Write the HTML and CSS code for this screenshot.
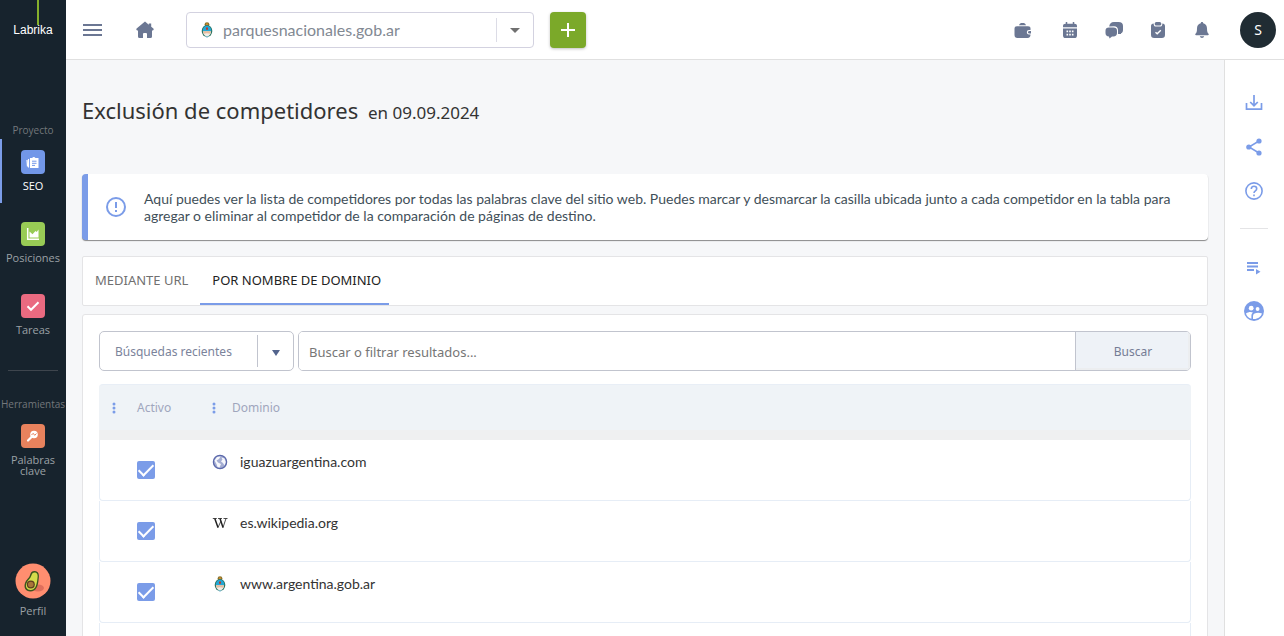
FILE: index.html
```html
<!DOCTYPE html>
<html lang="es">
<head>
<meta charset="utf-8">
<meta name="viewport" content="width=device-width, initial-scale=1">
<title>Exclusión de competidores</title>
<link rel="stylesheet" href="styles.css">
</head>
<body>
<svg class="defs" aria-hidden="true">
  <symbol id="crest" viewBox="0 0 16 16">
    <circle cx="8" cy="2.600" r="2.400" fill="#8a742c"/>
    <circle cx="8" cy="2.200" r="1" fill="#d88b2c"/>
    <ellipse cx="8" cy="9" rx="5.300" ry="6" fill="#2d7460"/>
    <path d="M3.700 9.200C3.700 2 12.300 2 12.300 9.200Z" fill="#22a7d6"/>
    <path d="M4 9.200h8c0 6.800-8 6.800-8 0Z" fill="#f0eee9"/>
    <path d="M4 9.200h8l-.8 2.600L8 11.200l-3.200.6Z" fill="#e8bd9f"/>
    <path d="M7 5.500h2v2.200H7Z" fill="#b83b31"/>
    <path d="M6 14.300h4L8 16Z" fill="#8fc8dc"/>
  </symbol>
</svg>
<div class="app">
  <nav class="sidebar" aria-label="Principal">
    <a class="logo" href="#"><span class="logo-line"></span>Labrika</a>
    <p class="group">Proyecto</p>
    <a class="item active" href="#">
      <span class="tile blue"><svg width="14" height="14" viewBox="0 0 14 14"><path d="M4 3h2.200a1.800 1.800 0 0 1 3.200 0H12.500v10H4Z" fill="#fff"/><path d="M2.500 4v8.500M1 5l.5 6.500" stroke="#fff" stroke-width="1.200"/><path d="M6 6.200h4.500M6 8.300h4.500M6 10.400h3" stroke="#7297e8"/></svg></span>
      SEO</a>
    <a class="item" href="#">
      <span class="tile green"><svg width="14" height="14" viewBox="0 0 14 14"><path d="M1.700 1v11.300H13" fill="none" stroke="#fff" stroke-width="1.500"/><path d="M3.500 10.500V4.500l3 2.700L9.500 4 10.700 5 12.500 2.500v8Z" fill="#fff"/></svg></span>
      Posiciones</a>
    <a class="item" href="#">
      <span class="tile pink"><svg width="14" height="14" viewBox="0 0 14 14"><path d="M1.500 7.300 5 10.800 12.500 3.300" fill="none" stroke="#fff" stroke-width="2"/></svg></span>
      Tareas</a>
    <hr class="side-rule">
    <p class="group">Herramientas</p>
    <a class="item tools" href="#">
      <span class="tile orange"><svg width="14" height="14" viewBox="0 0 14 14"><circle cx="8" cy="5.500" r="3.800" fill="#fff"/><path d="M5.500 8 2 11.500" stroke="#fff" stroke-width="2.200" stroke-linecap="round"/><path d="m5.500 6 1.700-1.700 1.500 2L10.500 4.500" stroke="#e8825d" fill="none"/></svg></span>
      Palabras clave</a>
    <a class="item profile" href="#">
      <svg width="36" height="36" viewBox="0 0 36 36"><circle cx="18" cy="18" r="17.500" fill="#ff8e70"/><ellipse cx="23" cy="25" rx="6" ry="3.500" fill="#df6f5c"/><path d="M20 8c5 .5 4 6 3.500 9.500C23 23 21 28.500 15.500 28.500c-5 0-7-4-5.500-8.500 1.500-4 4-4.500 5-8 .7-2.500 2-4.200 5-4Z" fill="#3c541d"/><path d="M20 9.500c3.500.5 2.800 4.500 2.200 8C21.500 22.500 20 27 15.700 27c-4 0-5.500-3-4.300-6.500 1.200-3.500 4-4.500 5-8 .6-2 1.600-3.200 3.600-3Z" fill="#d5dc4b"/><circle cx="15.800" cy="21.500" r="4" fill="#5d3c20"/><circle cx="15.800" cy="21.500" r="2.800" fill="#a9753a"/></svg>
      Perfil</a>
  </nav>

  <header class="topbar">
    <button class="icon-btn menu" aria-label="Menú"><svg width="20" height="14" viewBox="0 0 20 14"><path d="M0 2h19M0 7h19M0 12h19" stroke="#6b7793" stroke-width="2"/></svg></button>
    <a class="home" href="#" aria-label="Inicio"><svg width="18" height="18" viewBox="0 0 18 18"><path d="M9 .5.600 7.500Q-.2 9.200 1.200 9.500H2v6A1.500 1.500 0 0 0 3.500 17H7v-4a1 1 0 0 1 1-1h2a1 1 0 0 1 1 1v4h3.500a1.500 1.500 0 0 0 1.500-1.500v-6h.8Q18.200 9.200 17.400 7.500L15.200 5.700V2.500h-2.400V3.700Z" fill="#6b7793"/></svg></a>
    <div class="site">
      <svg class="site-icon" width="16" height="16" aria-hidden="true"><use href="#crest"/></svg>
      <select class="site-select" aria-label="Sitio web"><option>parquesnacionales.gob.ar</option></select>
      <svg class="site-arrow" width="37" height="24" viewBox="0 0 37 24" aria-hidden="true"><path d="M.5 0v24" stroke="#dcdce6"/><path d="M14 10h10l-5 5Z" fill="#707070"/></svg>
    </div>
    <button class="add" aria-label="Agregar"><svg width="14" height="14" viewBox="0 0 14 14"><path d="M7 0v14M0 7h14" stroke="#fff" stroke-width="2"/></svg></button>
    <div class="actions">
      <button class="icon-btn wallet" aria-label="Cartera"><svg width="18" height="18" viewBox="0 0 18 18" fill="#6b7793"><path d="M5 4.300C5.500 2.500 6.500 2 8.500 2s3 .5 3.500 2.300Z"/><path d="M3 5.200h11c1.600 0 2.500.9 2.500 2.300V9H15a2.200 2.200 0 0 0 0 4.400h1.500c0 2-.8 3.600-3 3.600H3.500C1.500 17 .5 16 .5 14V7.700C.5 6 1.400 5.200 3 5.200Z"/><path d="M15.300 10H17v2.500h-1.700a1.200 1.200 0 0 1 0-2.500Z"/></svg></button>
      <button class="icon-btn" aria-label="Calendario"><svg width="18" height="18" viewBox="0 0 18 18"><path d="M2 6.200V5c0-1.500 1-2.300 2.500-2.300h9C15 2.700 16 3.500 16 5v1.200ZM2 7.400h14v7c0 1.700-1 2.600-2.500 2.600h-9C3 17 2 16 2 14.400Z" fill="#6b7793"/><path d="M5.500 1v3M12.500 1v3" stroke="#6b7793" stroke-width="1.500"/><path d="M5.500 10.400h7M5.500 13.600h7" stroke="#fff" stroke-width="1.800" stroke-dasharray="1.600 1.100"/></svg></button>
      <button class="icon-btn" aria-label="Mensajes"><svg width="20" height="18" viewBox="0 0 20 18" fill="#6b7793"><path d="M5.200 5.500C5.700 2.500 7 1 10 1h4.500C17.500 1 19 2.500 19 5v4c0 2-1 3-2 3.300V13h-3V9c0-2.500-1.500-3.800-4-3.800Z"/><path d="M5 6.500h4.500c2.200 0 3.500 1 3.500 3.200V12c0 2.300-1.300 3.500-3.500 3.500H8L5.500 17.500 5 15.500C2.700 15.500 1.500 14.300 1.500 12V9.700C1.500 7.500 2.800 6.500 5 6.500Z"/></svg></button>
      <button class="icon-btn" aria-label="Tareas"><svg width="18" height="18" viewBox="0 0 18 18"><path d="M2 5.200C2 3.400 3 2.500 4.600 2.400 4.800 4.700 5.500 5.500 7 5.500h4c1.500 0 2.200-.8 2.400-3.100C15 2.500 16 3.400 16 5.200v8.600c0 2.200-1 3.200-3.200 3.200H5.200C3 17 2 16 2 13.800Z" fill="#6b7793"/><rect x="5.700" y="1" width="6.600" height="3.500" rx="1.600" fill="#6b7793"/><path d="m6.500 11.200 1.700 1.600L11.800 9.300" fill="none" stroke="#fff" stroke-width="1.400"/></svg></button>
      <button class="icon-btn" aria-label="Notificaciones"><svg width="18" height="18" viewBox="0 0 18 18" fill="#6b7793"><path d="M9 1c.8 0 1.200.6 1.200 1.200C13 2.800 14 5 14 7.500c0 3.300.5 4.200 1.500 5.200.5.600.3 1.500-.6 1.500H3.100c-.9 0-1.100-.9-.6-1.500C3.500 11.700 4 10.800 4 7.500 4 5 5 2.800 7.800 2.200 7.800 1.600 8.200 1 9 1ZM6.800 15.200h4.400c-.4 1.200-1.200 1.700-2.200 1.700s-1.800-.5-2.200-1.700Z"/></svg></button>
      <button class="avatar">S</button>
    </div>
  </header>

  <main class="main">
    <h1 class="title">Exclusión de competidores <small>en 09.09.2024</small></h1>
    <section class="notice">
      <svg class="notice-icon" width="20" height="20" viewBox="0 0 20 20"><circle cx="10" cy="10" r="9" fill="none" stroke="#7b9ce8" stroke-width="2"/><path d="M10 5v6M10 13v2" stroke="#7b9ce8" stroke-width="2"/></svg>
      <p>Aquí puedes ver la lista de competidores por todas las palabras clave del sitio web. Puedes marcar y desmarcar la casilla ubicada junto a cada competidor en la tabla para agregar o eliminar al competidor de la comparación de páginas de destino.</p>
    </section>
    <div class="tabs" role="tablist">
      <button class="tab" role="tab" aria-selected="false">MEDIANTE URL</button>
      <button class="tab selected" role="tab" aria-selected="true">POR NOMBRE DE DOMINIO</button>
    </div>
    <section class="panel">
      <form class="search">
        <button type="button" class="recent"><span class="recent-label">Búsquedas recientes</span><span class="recent-arrow"><svg width="8" height="6" viewBox="0 0 8 6"><path d="M0 0h8L4 6Z" fill="#53648d"/></svg></span></button>
        <div class="query">
          <input class="query-input" type="text" aria-label="Buscar" placeholder="Buscar o filtrar resultados...">
          <button type="button" class="query-btn">Buscar</button>
        </div>
      </form>
      <table class="grid">
        <thead>
          <tr>
            <th class="col-active"><span class="head"><svg width="4" height="12" viewBox="0 0 4 12" fill="#7b9ce8"><circle cx="2" cy="2" r="1.500"/><circle cx="2" cy="6" r="1.500"/><circle cx="2" cy="10" r="1.500"/></svg>Activo</span></th>
            <th><span class="head head-domain"><svg width="4" height="12" viewBox="0 0 4 12" fill="#7b9ce8"><circle cx="2" cy="2" r="1.500"/><circle cx="2" cy="6" r="1.500"/><circle cx="2" cy="10" r="1.500"/></svg>Dominio</span></th>
          </tr>
        </thead>
        <tbody>
          <tr>
            <td class="cell-check"><input class="check" type="checkbox" checked aria-label="iguazuargentina.com"></td>
            <td><span class="domain"><svg width="16" height="16" viewBox="0 0 16 16"><circle cx="8" cy="8" r="6.600" fill="#a5aed3" stroke="#5b68ab" stroke-width="1.300"/><path d="M2.500 6.500 5 3 8.500 2.500 7 5 4.500 6.500 6 8.500 9 10 7.500 13.500 5.500 13 4.500 10ZM9.500 3.500 12.500 4.500 13.700 8 12.500 11.500 11 9 9 7.500 10.500 5.500Z" fill="#f7f8fc"/></svg>iguazuargentina.com</span></td>
          </tr>
          <tr>
            <td class="cell-check"><input class="check" type="checkbox" checked aria-label="es.wikipedia.org"></td>
            <td><span class="domain"><svg width="16" height="16" viewBox="0 0 16 16" fill="none" stroke="#222"><path d="M.8 3.500h4M6 3.500h4M11.500 3.500H15.500" stroke-width=".8"/><path d="M2.800 3.500 6 12.500M8 3.500 11 12.500" stroke-width="1.500"/><path d="M5.800 12.800 9 6M10.900 12.800 14 3.500" stroke-width=".8"/></svg>es.wikipedia.org</span></td>
          </tr>
          <tr>
            <td class="cell-check"><input class="check" type="checkbox" checked aria-label="www.argentina.gob.ar"></td>
            <td><span class="domain"><svg width="16" height="16"><use href="#crest"/></svg>www.argentina.gob.ar</span></td>
          </tr>
          <tr><td></td><td></td></tr>
        </tbody>
      </table>
    </section>
  </main>

  <aside class="rail" aria-label="Herramientas de página">
    <button class="icon-btn" aria-label="Descargar"><svg width="18" height="18" viewBox="0 0 18 18" fill="none" stroke="#7b9ce8" stroke-width="1.700"><path d="M1.500 9v6.200h15V9M9 1v10.500M5.200 8 9 11.700 12.800 8"/></svg></button>
    <button class="icon-btn" aria-label="Compartir"><svg width="18" height="18" viewBox="0 0 18 18" fill="#7b9ce8"><path d="M14 3 4 9l10 6" fill="none" stroke="#7b9ce8" stroke-width="1.500"/><circle cx="14" cy="3" r="2.600"/><circle cx="3.800" cy="9" r="2.600"/><circle cx="14" cy="15" r="2.600"/></svg></button>
    <button class="icon-btn" aria-label="Ayuda"><svg width="18" height="18" viewBox="0 0 18 18" fill="none" stroke="#7b9ce8" stroke-width="1.600"><circle cx="9" cy="9" r="8.100"/><path d="M6.300 7C6.300 3.300 11.700 3.500 11.700 6.800 11.700 8.900 9 8.800 9 11M9 12.500v1.700"/></svg></button>
    <hr class="rail-rule">
    <button class="icon-btn" aria-label="Lista"><svg width="18" height="18" viewBox="0 0 18 18"><path d="M2 5h11M2 8.500h11M2 12h7" stroke="#7b9ce8" stroke-width="1.800"/><path d="M11 11v5.500L15.500 13.800Z" fill="#7b9ce8"/></svg></button>
    <button class="icon-btn" aria-label="Competidores"><svg width="20" height="20" viewBox="0 0 20 20"><circle cx="10" cy="10" r="10" fill="#7b9ce8"/><g fill="#fff"><circle cx="7.200" cy="7.200" r="2.400"/><circle cx="13.600" cy="8" r="1.900"/><path d="M2 12.500c2-1.500 5-2 7-.9-1.200.9-1.600 2-1.600 3.600v2.500C4.500 17 2.500 15 2 12.500ZM9 18v-3c0-3 5-4 9-2.500-1 3.300-4.500 6-9 5.500Z"/></g></svg></button>
  </aside>
</div>
</body>
</html>
```
FILE: styles.css
```css
* { box-sizing: border-box; }
body {
  margin: 0;
  background: #f6f7f9;
  color: #333;
  font-family: "Noto Sans", "Open Sans", sans-serif;
  font-size: 13px;
}
button, input, select { font: inherit; }
button { margin: 0; padding: 0; border: 0; background: none; cursor: pointer; }
a { color: inherit; text-decoration: none; }
p, h1 { margin: 0; font-weight: 400; }
svg { display: block; flex: none; }
.defs { position: absolute; width: 0; height: 0; }

.app {
  display: grid;
  grid-template: 60px 1fr / 66px 1fr 60px;
  height: 100vh;
  overflow: hidden;
}

.sidebar {
  grid-row: 1 / 3;
  display: flex;
  flex-direction: column;
  align-items: stretch;
  background: #17232d;
  color: #9ba1a5;
  font-family: "Open Sans", "Noto Sans", sans-serif;
  font-size: 11px;
  line-height: 11px;
  text-align: center;
}
.logo {
  position: relative;
  height: 60px;
  padding-top: 22px;
  color: #fff;
  font-family: "Liberation Sans", sans-serif;
  font-size: 12px;
  line-height: 16px;
}
.logo-line { position: absolute; left: 37px; top: 0; width: 2px; height: 25px; background: #86b02c; }
.group { color: #73777b; font-size: 10px; line-height: 12px; }
.logo + .group { margin-top: 64px; }
.item {
  display: flex;
  flex-direction: column;
  align-items: center;
  gap: 6px;
  height: 64px;
  margin-bottom: 8px;
  padding: 11px 6px 0;
  border-left: 2px solid transparent;
  border-right: 2px solid transparent;
}
.group + .item { margin-top: 3px; }
.item.active { border-left-color: #7b9ce8; color: #fff; }
.item:not(.tools) { white-space: nowrap; }
.tile { display: flex; align-items: center; justify-content: center; width: 24px; height: 24px; border-radius: 4px; }
.blue { background: #7297e8; }
.green { background: #98cb55; }
.pink { background: #ea6a80; }
.orange { background: #e8825d; }
.side-rule { width: 50px; margin: 15px auto 27px; border: 0; border-top: 1px solid #3e454d; }
.profile { margin-top: auto; margin-bottom: 9px; padding-top: 0; }

.topbar {
  grid-column: 2 / 4;
  display: flex;
  align-items: center;
  padding: 0 8px 0 17px;
  background: #fff;
  border-bottom: 1px solid #e0e0e0;
}
.icon-btn { display: flex; align-items: center; justify-content: center; }
.home { margin-left: 33px; }
.site { position: relative; width: 348px; margin: 0 16px 0 32px; }
.site-select {
  display: block;
  width: 100%;
  height: 36px;
  padding: 0 40px 0 36px;
  border: 1px solid #d3d2e0;
  border-radius: 4px;
  appearance: none;
  background: #fff;
  color: #828993;
  font-family: Lato, "Noto Sans", sans-serif;
  font-size: 16px;
}
.site-icon, .site-arrow { position: absolute; pointer-events: none; }
.site-icon { left: 13px; top: 10px; }
.site-arrow { right: 1px; top: 6px; }
.add {
  display: flex;
  align-items: center;
  justify-content: center;
  width: 36px;
  height: 36px;
  border-radius: 4px;
  background: #7ba929;
  box-shadow: 0 1px 3px rgba(0, 0, 0, .25);
}
.actions { display: flex; align-items: center; gap: 26px; margin-left: auto; }
.actions .icon-btn { width: 18px; }
.actions .wallet { margin-right: 3px; }
.avatar { width: 36px; height: 36px; margin-left: 3px; border-radius: 50%; background: #202c33; color: #fff; font-size: 14px; }

.main { min-width: 0; padding: 0 16px; overflow: hidden; }
.title { padding: 34px 0 48px; font-size: 22px; line-height: 32px; }
.title small { margin-left: 4px; font-size: 17px; line-height: 1; }
.notice {
  display: flex;
  align-items: center;
  gap: 18px;
  min-height: 66px;
  padding: 0 24px 0 18px;
  border-left: 6px solid #7b9ce8;
  border-radius: 4px;
  background: #fff;
  box-shadow: 0 1px 1px rgba(0, 0, 0, .45);
  color: #3f4f59;
  font-family: Lato, "Noto Sans", sans-serif;
  font-size: 14px;
  line-height: 17px;
}
.tabs {
  display: flex;
  height: 50px;
  margin: 16px 0 8px;
  border: 1px solid #e4e4e6;
  border-radius: 2px;
  background: #fff;
}
.tab { padding: 0 12px; border-bottom: 2px solid transparent; color: #707070; }
.tab.selected { padding-right: 8px; border-bottom-color: #7b9ce8; color: #222; }
.panel { padding: 16px; border: 1px solid #e4e4e6; border-radius: 3px; background: #fff; }
.search { display: flex; gap: 4px; margin-bottom: 13px; }
.recent {
  display: flex;
  align-items: center;
  width: 195px;
  height: 40px;
  border: 1px solid #c1c4ce;
  border-radius: 5px;
  color: #7b839b;
  font-size: 12px;
}
.recent-label { flex: 1; padding-left: 15px; text-align: left; }
.recent-arrow { display: flex; align-items: center; justify-content: center; width: 36px; height: 32px; padding-top: 3px; border-left: 1px solid #c1c4ce; }
.query { display: flex; flex: 1; border: 1px solid #c1c4ce; border-radius: 5px; overflow: hidden; }
.query-input { flex: 1; min-width: 0; padding: 2px 10px 0; border: 0; background: #fff; color: #333; }
.query-input::placeholder { color: #767676; opacity: 1; }
.query-btn { width: 115px; border-left: 1px solid #c1c4ce; background: #eef2f7; box-shadow: inset -2px -2px 0 #eceef0; color: #757d95; font-size: 12px; }

.grid { width: 100%; border-collapse: separate; border-spacing: 0; table-layout: fixed; }
.grid th {
  height: 56px;
  padding: 0;
  border-top: 1px solid #e8eef6;
  border-bottom: 10px solid #eff0f1;
  background: #eff3f7;
  color: #a0a6bd;
  font-size: 12px;
  font-weight: 400;
  text-align: left;
}
.grid th:first-child { border-top-left-radius: 4px; }
.grid th:last-child { border-top-right-radius: 4px; }
.col-active { width: 100px; }
.head { display: flex; align-items: center; gap: 21px; padding-left: 13px; }
.head-domain { gap: 16px; }
.grid td { height: 61px; padding: 0; border-bottom: 1px solid #e6edf6; vertical-align: top; }
.grid td:first-child { border-left: 1px solid #e6edf6; border-bottom-left-radius: 4px; }
.grid td:last-child { border-right: 1px solid #e6edf6; border-bottom-right-radius: 4px; }
.grid .cell-check { padding: 21px 0 0 37px; }
.check {
  display: flex;
  justify-content: center;
  width: 18px;
  height: 18px;
  margin: 0;
  border-radius: 2px;
  appearance: none;
  background: #7b9ce8;
}
.check:checked::before {
  content: "";
  width: 6px;
  height: 13px;
  border: solid #fff;
  border-width: 0 2px 2px 0;
  transform: rotate(45deg);
}
.domain {
  display: flex;
  align-items: center;
  gap: 12px;
  padding: 13px 13px 0;
  font-family: Lato, "Noto Sans", sans-serif;
  font-size: 14px;
  line-height: 18px;
}

.rail {
  display: flex;
  flex-direction: column;
  align-items: center;
  gap: 26px;
  padding: 34px 1px 0 0;
  border-left: 1px solid #e0e0e0;
  background: #fff;
}
.rail .icon-btn { height: 18px; }
.rail-rule { width: 28px; margin: 2px 0 3px; border: 0; border-top: 1px solid #e4e4e6; }
```
